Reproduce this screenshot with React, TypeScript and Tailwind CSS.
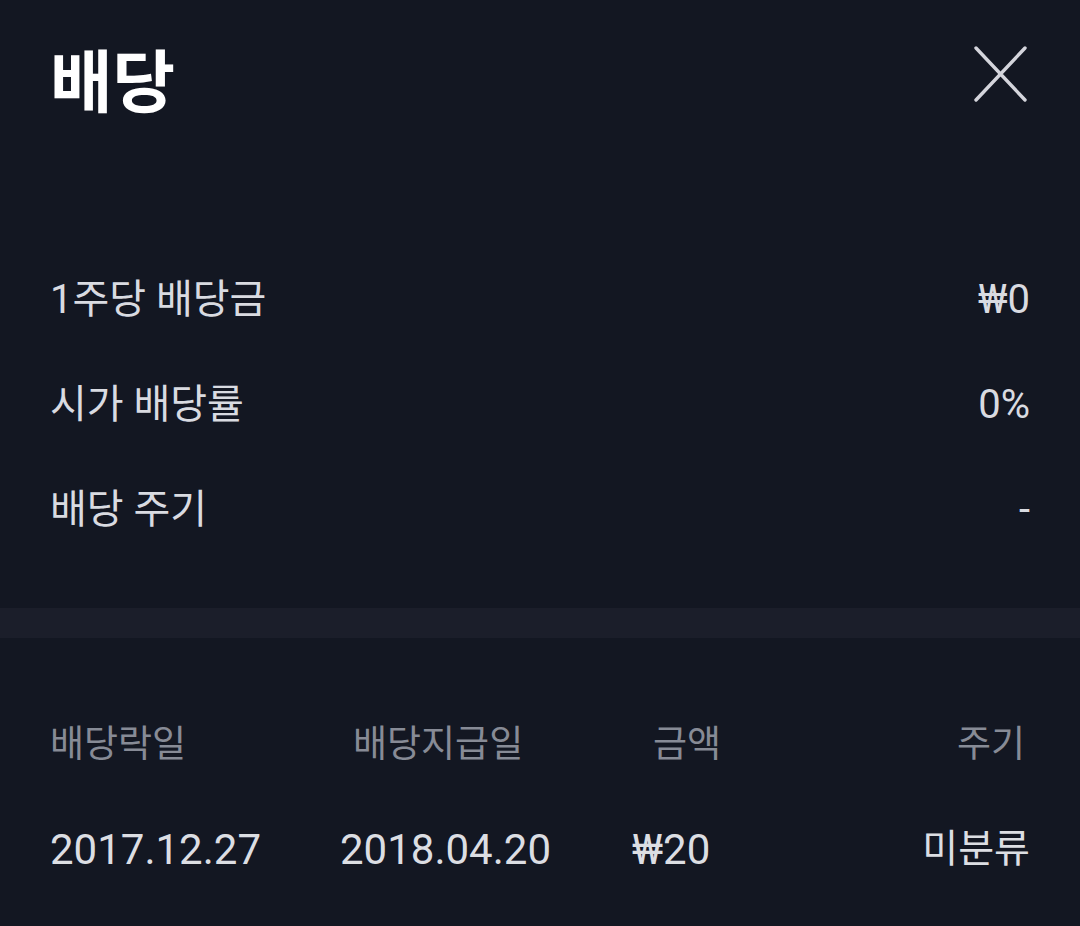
const FONT = "font-['Roboto','Noto_Sans_CJK_KR',sans-serif]";

const summary = [
  { label: "1주당 배당금", value: "₩0" },
  { label: "시가 배당률", value: "0%" },
  { label: "배당 주기", value: "-" },
];

const history = [
  { exDate: "2017.12.27", payDate: "2018.04.20", amount: "₩20", cycle: "미분류" },
];

const CloseIcon = () => (
  <svg width="56" height="56" viewBox="0 0 56 56" fill="none">
    <path d="M4 2 L53 54 M53 2 L4 54" stroke="#d4d5dc" strokeWidth="3.4" strokeLinecap="round" />
  </svg>
);

export default function App() {
  return (
    <div className={`w-[1080px] h-[926px] bg-[#131722] overflow-hidden ${FONT}`}>
      {/* header */}
      <div className="h-[164px] flex items-center justify-between pl-[50px] pr-[52px]">
        <h1 className="mb-[8px] text-[68px] font-bold text-white leading-none font-['Noto_Sans_CJK_KR',sans-serif]">배당</h1>
        <div className="mb-[16px]">
          <CloseIcon />
        </div>
      </div>

      {/* summary rows */}
      <div className="mt-[83px] px-[50px]">
        {summary.map((row) => (
          <div key={row.label} className="h-[105px] flex items-center justify-between text-[40px] text-[#d9dbe1]">
            <span>{row.label}</span>
            <span className="text-[40px]">{row.value}</span>
          </div>
        ))}
      </div>

      <div className="mt-[46px] h-[30px] bg-[#1b1e2a]" />

      {/* history table */}
      <div className="mt-[55px] px-[50px]">
        <div className="h-[104px] grid grid-cols-[290px_230px_220px_1fr] items-center text-[37px] text-[#878b96]">
          <span>배당락일</span>
          <span className="pl-[13px]">배당지급일</span>
          <span className="pl-[83px]">금액</span>
          <span className="text-right pr-[5px]">주기</span>
        </div>
        {history.map((h) => (
          <div key={h.exDate} className="h-[104px] grid grid-cols-[290px_230px_220px_1fr] items-center text-[42px] text-[#dcdee3]">
            <span>{h.exDate}</span>
            <span>{h.payDate}</span>
            <span className="pl-[62px]">{h.amount}</span>
            <span className="text-right text-[39px]">{h.cycle}</span>
          </div>
        ))}
      </div>
    </div>
  );
}
